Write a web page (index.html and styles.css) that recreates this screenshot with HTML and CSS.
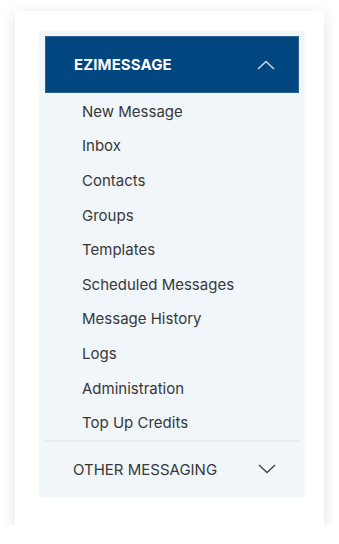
FILE: index.html
```html
<!DOCTYPE html>
<html>
<head>
<meta charset="utf-8">
<link rel="stylesheet" href="styles.css">
</head>
<body>
<div class="card">
  <nav class="panel">
    <div class="head">
      <span class="head-title">EZIMESSAGE</span>
      <svg class="chev" width="18" height="10" viewBox="0 0 18 10"><path d="M1 9 L9 1.5 L17 9" fill="none" stroke="#c9d4e2" stroke-width="1.6"/></svg>
    </div>
    <ul class="items">
      <li>New Message</li>
      <li>Inbox</li>
      <li>Contacts</li>
      <li>Groups</li>
      <li>Templates</li>
      <li>Scheduled Messages</li>
      <li>Message History</li>
      <li>Logs</li>
      <li>Administration</li>
      <li>Top Up Credits</li>
    </ul>
    <div class="other">
      <span>OTHER MESSAGING</span>
      <svg class="chev" width="18" height="10" viewBox="0 0 18 10"><path d="M1 1 L9 8.5 L17 1" fill="none" stroke="#444" stroke-width="1.4"/></svg>
    </div>
  </nav>
</div>
</body>
</html>
```
FILE: styles.css
```css
html, body { margin: 0; padding: 0; background: #fff; }
body { font-family: Inter, "Noto Sans", sans-serif; }
.card {
  margin: 11px 0 0 15px;
  width: 309px;
  height: 514px;
  box-sizing: border-box;
  background: #fff;
  box-shadow: 0 4px 14px rgba(0,0,0,0.13);
  padding: 20px 19px 0 24px;
}
.panel {
  background: #f0f6fa;
  padding: 5px 6px 6px 6px;
  height: 466px;
  box-sizing: border-box;
}
.head {
  background: #00467f;
  height: 57px;
  display: flex;
  align-items: center;
  justify-content: space-between;
  padding: 0 23px 0 28px;
  border: 1px solid #2c6294;
  box-sizing: border-box;
}
.head-title {
  color: #fff;
  font-weight: 700;
  font-size: 15px;
  letter-spacing: 0.1px;
}
.items { list-style: none; margin: 0; padding: 1px 0 0 0; }
.items li {
  height: 34.6px;
  display: flex;
  align-items: center;
  padding-left: 37px;
  font-size: 15px;
  color: #383838;
}
.other {
  border-top: 2px solid #e6ebef;
  height: 55px;
  display: flex;
  align-items: center;
  justify-content: space-between;
  padding: 2px 23px 0 28px;
  box-sizing: border-box;
  font-size: 15px;
  color: #383838;
}
```
